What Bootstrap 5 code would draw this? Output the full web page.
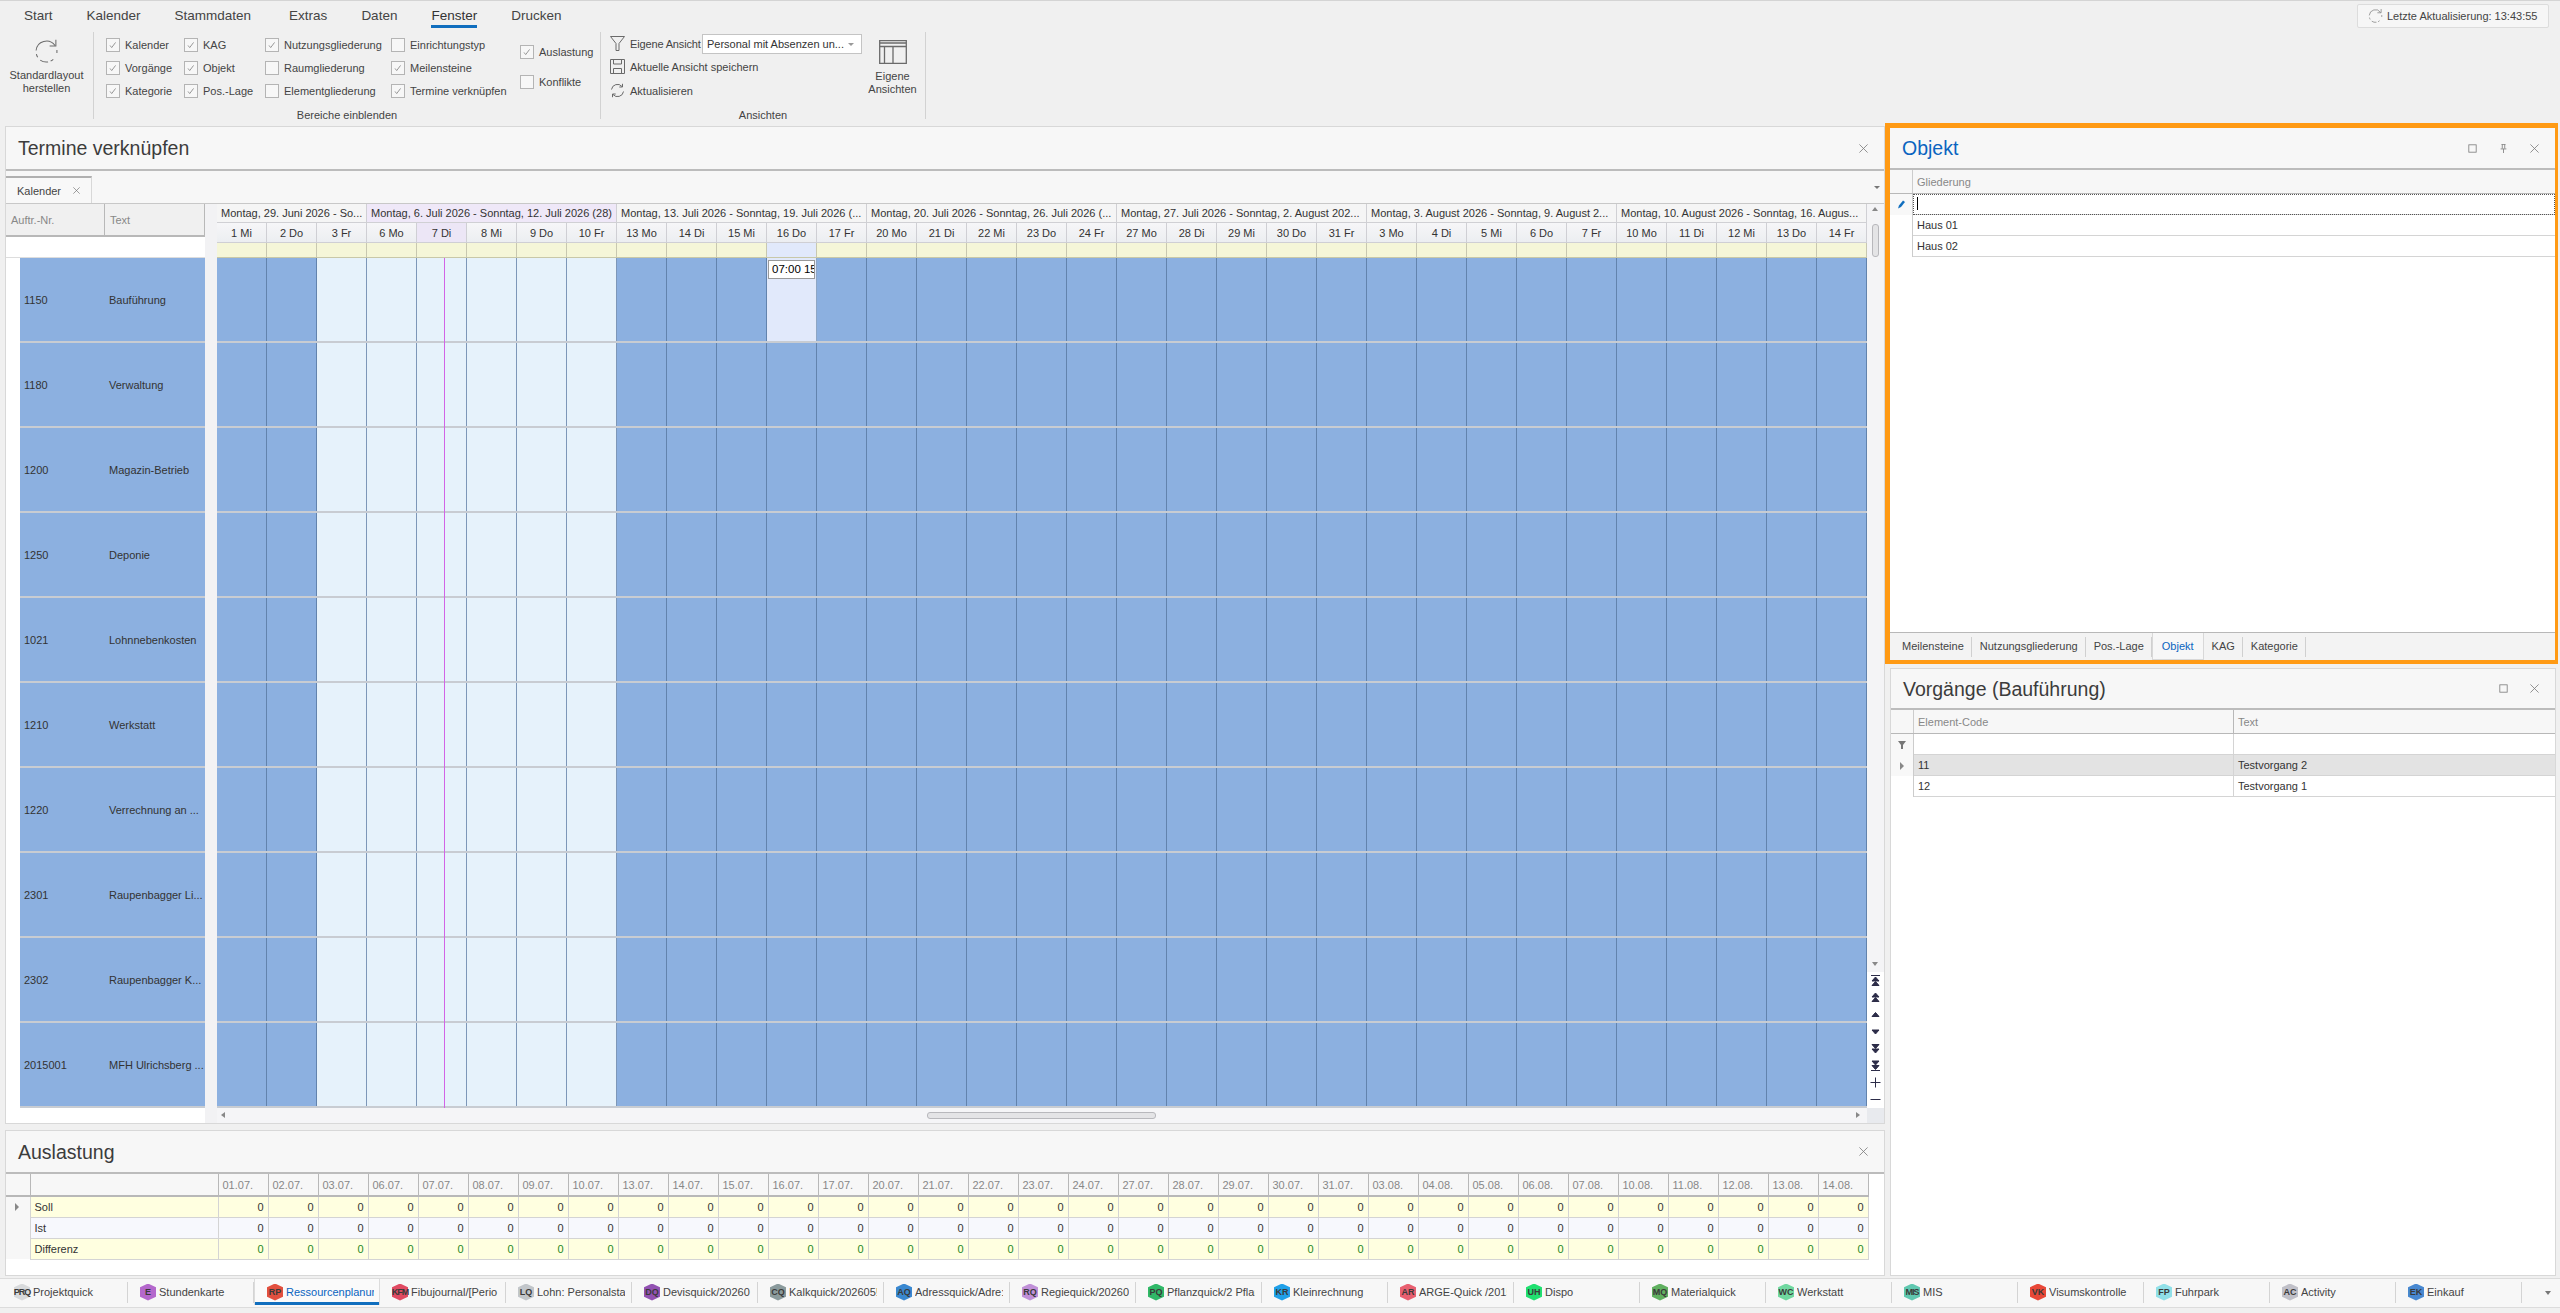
<!DOCTYPE html>
<html lang="de">
<head>
    <meta charset="UTF-8">
    <title>Ressourcenplanung</title>
    <link href="https://cdn.jsdelivr.net/npm/bootstrap@5.3.2/dist/css/bootstrap.min.css" rel="stylesheet">
    <style>
        html, body { height: 100%; }
        body {
            background: #f0f0f0;
            overflow: hidden;
            font: 11px/14px "Liberation Sans", sans-serif;
            color: #333;
            display: flex;
            flex-direction: column;
        }
        .ico { fill: none; stroke: #6a6a6a; stroke-width: 1; display: block; flex: none; }
        .ico-big { stroke-width: 1.3; }

        /* ribbon */
        .ribbon { height: 123px; flex: none; border-top: 1px solid #d4d4d4; position: relative; }
        .rb-tabs { height: 27px; padding-left: 14px; }
        .rb-tabs .nav-link { font-size: 13.5px; line-height: 30px; padding: 0 10px; color: #444; height: 27px; margin-right: 14px; }
        .rb-tabs .nav-link.active { color: #333; box-shadow: inset 0 -3px 0 #106ebe; padding: 0; margin: 0 24px 0 10px; }
        .rb-body { height: 87px; margin-top: 4px; }
        .rb-group { border-right: 1px solid #d2d2d2; display: flex; flex-direction: column; flex: none; }
        .rb-label { height: 12px; line-height: 16px; text-align: center; color: #444; }
        .rb-main { height: 75px; flex: none; display: flex; }
        .rb-big { text-align: center; line-height: 13px; color: #444; }
        .rb-first { height: 87px; align-items: center; }
        .rb-first .ico { margin: 7px 0 5px; }
        .rb-cols { padding-left: 12px; }
        .rb-col { display: flex; flex-direction: column; padding-top: 1px; }
        .rb-col label { height: 23px; display: flex; align-items: center; white-space: nowrap; color: #444; }
        .rb-col.wide label { height: 30px; }
        .rb-col.wide { padding-top: 5px; }
        .rb-check.form-check-input {
            width: 14px; height: 14px; margin: 0 5px 0 0; flex: none; border-radius: 0;
            border: 1px solid #b4b4b4; background-color: #f7f7f7;
        }
        .rb-check.form-check-input:checked {
            background-color: #f7f7f7; border-color: #b4b4b4;
            background-image: url("data:image/svg+xml,%3csvg xmlns='http://www.w3.org/2000/svg' viewBox='0 0 14 14'%3e%3cpath fill='none' stroke='%23888' d='M3.5 7.5l2 2.5 4.5-6'/%3e%3c/svg%3e");
        }
        .view-list { width: 262px; padding-left: 9px; }
        .view-row { height: 23px; display: flex; align-items: center; gap: 5px; white-space: nowrap; color: #444; }
        .view-row.last { margin-top: 1px; }
        .view-name { width: 67px; flex: none; letter-spacing: -.15px; }
        .view-select {
            width: 160px; height: 20px; background: #fff; border: 1px solid #c4c4c4;
            padding: 0 4px; line-height: 18px; position: relative; color: #333;
        }
        .view-select::after {
            content: ""; position: absolute; right: 7px; top: 8px;
            border: 3px solid transparent; border-top: 3px solid #999; border-bottom: 0;
        }
        .view-big { flex: 1; display: flex; flex-direction: column; align-items: center; padding-right: 3px; }
        .view-big .ico { margin: 8px 0 6px; }
        .refresh-btn {
            position: absolute; top: 3px; right: 11px; width: 192px; height: 24px;
            background: #f6f6f6; border: 1px solid #dcdcdc; border-radius: 2px;
            display: flex; align-items: center; gap: 4px; padding-left: 10px; color: #444;
        }

        /* docking area */
        .dock { flex: 1; display: flex; min-height: 0; padding-left: 5px; padding-right: 2px; }
        .dock-left { width: 1880px; flex: none; display: flex; flex-direction: column; gap: 6px; padding-top: 3px; padding-bottom: 2px; }
        .dock-right { flex: 1; display: flex; flex-direction: column; gap: 4px; padding-bottom: 2px; min-width: 0; }
        .pane { background: #f7f7f7; border: 1px solid #d8d8d8; display: flex; flex-direction: column; min-height: 0; }
        .pane-head { height: 44px; flex: none; display: flex; align-items: center; padding: 0 16px 0 12px; gap: 22px; border-bottom: 2px solid #bcbcbc; }
        .pane-head .ico { stroke: #7c7c7c; }
        .pane-title { font-size: 19.5px; line-height: 24px; color: #3c3c3c; margin-right: auto; }
        .plan-pane { flex: 1; }
        .load-pane { height: 146px; flex: none; }
        .load-pane .pane-head { height: 43px; }

        .doc-strip { height: 32px; flex: none; display: flex; position: relative; }
        .doc-tab { width: 86px; height: 27px; margin-top: 5px; border-top: 2px solid #b0b0b0; border-right: 1px solid #d8d8d8; display: flex; align-items: center; padding-left: 11px; gap: 12px; background: #f8f8f8; color: #444; }
        .doc-more { position: absolute; right: 4px; top: 15px; border: 3px solid transparent; border-top: 3px solid #777; border-bottom: 0; }

        .plan-body { flex: 1; display: flex; min-height: 0; border-top: 1px solid #c8c8c8; }
        .plan-side { width: 199px; flex: none; background: #fff; }
        .side-head { display: grid; grid-template-columns: 99px 100px; height: 33px; background: #f0f0f0; border-bottom: 2px solid #b8b8b8; color: #888; }
        .side-head div { padding: 9px 5px; border-right: 1px solid #b8b8b8; }
        .side-filter { height: 21px; border-bottom: 1px solid #ddd; }
        .side-row { height: 85px; margin-left: 14px; background: #8cb0e0; border-bottom: 2px solid #c8ccd2; display: grid; grid-template-columns: 85px 100px; align-items: center; color: #333; }
        .side-row div { padding-left: 4px; white-space: nowrap; overflow: hidden; }
        .plan-gap { width: 12px; flex: none; background: #f2f2f4; }
        .plan-grid { width: 1650px; flex: none; display: flex; flex-direction: column; position: relative; }
        .week-line, .day-line, .mark-line, .plan-row { display: grid; grid-template-columns: repeat(33, 50px); }
        .week-line { height: 19px; background: #f5f5f5; border-bottom: 1px solid #d0d0d4; }
        .week-cell { padding: 2px 0 0 4px; white-space: nowrap; overflow: hidden; border-right: 1px solid #d0d0d4; color: #333; }
        .week-cell.now { background: #efe8f8; }
        .day-line { height: 20px; background: linear-gradient(#f6f6f8, #eceef1); border-bottom: 1px solid #cfcfd4; }
        .day-cell { text-align: center; padding-top: 3px; border-right: 1px solid #cfcfd4; color: #333; }
        .day-cell.now { background: #ece6f6; }
        .mark-line { height: 15px; background: #f5f6d8; border-bottom: 1px solid #c8c8a8; }
        .mark-cell { border-right: 1px solid #c8c8b0; }
        .mark-cell.sel { background: #e1e9fb; }
        .plan-row { height: 85px; border-bottom: 2px solid #c8ccd2; }
        .plan-cell { background: #8cb0e0; border-right: 1px solid #6283ad; }
        .plan-cell.off { background: #e6f2fb; border-right-color: #7d97b8; }
        .plan-cell.sel { background: #e1e9fb; padding: 2px 1px; border-right-color: #8ea6c4; }
        .plan-event { height: 19px; background: #fff; border: 1px solid #999; color: #000; white-space: nowrap; overflow: hidden; padding: 1px 3px; font-size: 11.5px; line-height: 15px; }
        .today-line { position: absolute; left: 227px; top: 54px; bottom: 15px; width: 1px; background: #d264e6; }
        .plan-hbar { height: 15px; background: #f5f5f7; position: relative; flex: none; }
        .hbar-thumb { position: absolute; left: 710px; top: 4px; width: 229px; height: 7px; background: #e4e4e6; border: 1px solid #b8b8bc; border-radius: 3px; }
        .arrow-l, .arrow-r { position: absolute; top: 4px; border: 3px solid transparent; }
        .arrow-l { left: 4px; border-right: 4px solid #888; border-left: 0; }
        .arrow-r { right: 7px; border-left: 4px solid #888; border-right: 0; }
        .plan-vbar { width: 17px; flex: none; display: flex; flex-direction: column; background: #f4f4f6; position: relative; }
        .vbar-thumb { position: absolute; left: 5px; top: 20px; width: 7px; height: 33px; background: #e4e4e6; border: 1px solid #b8b8bc; border-radius: 3px; }
        .vbar-track { flex: 1; position: relative; }
        .vbar-up { position: absolute; left: 5px; top: 3px; border: 3px solid transparent; border-bottom: 4px solid #888; border-top: 0; }
        .vbar-down { position: absolute; left: 5px; bottom: 6px; border: 3px solid transparent; border-top: 4px solid #888; border-bottom: 0; }
        .nav-stack { background: #fff; }
        .nav-stack svg { display: block; width: 17px; height: 17px; fill: #2c2c48; stroke: #2c2c48; stroke-width: 1; }
        .vbar-corner { height: 15px; background: #e8eaee; }

        /* load table */
        .load-wrap { flex: 1; background: #fff; overflow: hidden; }
        .load-table.table { table-layout: fixed; width: 1862px; margin: 0; border-collapse: collapse; }
        .load-table th, .load-table td { height: 21px; padding: 0 4px; font-weight: 400; line-height: 14px; border: 1px solid #d4d4d4; white-space: nowrap; color: #333; vertical-align: middle; }
        .load-table th { height: 22px; background: #f7f7f7; color: #888; border-width: 0 1px 2px 0; border-color: #b8b8b8; }
        .load-table td.num { text-align: right; }
        .load-table td.gut { background: #f7f7f7; border: 0; padding: 0 0 0 9px; }
        .load-table tr.soll td { background: #ffffe0; }
        .load-table tr.ist td { background: #f7f8fd; }
        .load-table tr.diff td { background: #ffffe0; }
        .load-table tr.diff td.num { color: #1e8a1e; }
        .load-table tr td.gut { background: #f7f7f7; }
        .row-mark { display: block; border: 4px solid transparent; border-left: 4px solid #888; border-right: 0; width: 0; }

        /* right panes */
        .focus-pane { height: 541px; flex: none; border: 5px solid #ff9a14; border-bottom-width: 4px; border-right-width: 3px; }
        .focus-pane .pane-title { color: #0a64c0; }
        .focus-pane .pane-head { height: 42px; }
        .list-grid { flex: 1; background: #fff; min-height: 0; }
        .grid-head { height: 24px; display: flex; background: #f7f7f7; color: #888; border-bottom: 1px solid #b8b8b8; }
        .grid-row { height: 21px; display: flex; }
        .grid-gut { width: 23px; flex: none; display: flex; align-items: center; justify-content: center; background: #f8f8f8; border-right: 1px solid #ccc; }
        .grid-row.blank .grid-gut { background: #fff; border-right: 1px solid #ccc; }
        .grid-cell { flex: 1; padding: 3px 4px; border-bottom: 1px solid #d4d4d4; color: #333; }
        .grid-cell.code { flex: none; width: 320px; border-right: 1px solid #d4d4d4; }
        .grid-head .grid-cell { padding-top: 5px; color: #888; border-bottom: 0; }
        .grid-head .grid-cell.code { border-right: 1px solid #b8b8b8; }
        .grid-gut.head { background: #f7f7f7; border-right: 1px solid #ccc; }
        .grid-row.current .grid-cell { background: #e3e3e3; }
        .edit-cell { outline: 1px dotted #555; outline-offset: -1px; position: relative; }
        .caret-mark { display: block; width: 1px; height: 13px; background: #000; }
        .pane-tabs { height: 28px; flex: none; display: flex; background: #f3f3f3; border-top: 1px solid #b8b8b8; align-items: stretch; padding-left: 4px; }
        .pane-tabs a { padding: 6px 8px 0; color: #444; text-decoration: none; position: relative; }
        .pane-tabs a:not(.on)::after { content: ""; position: absolute; right: 0; top: 4px; bottom: 3px; width: 1px; background: #d0d0d0; }
        .pane-tabs a.on { color: #0a64c0; background: #f7f7f7; border-left: 1px solid #d8d8d8; border-right: 1px solid #d8d8d8; border-bottom: 1px solid #d8d8d8; padding: 6px 9px 0; }
        .side-pane { flex: 1; margin-left: 5px; margin-right: 2px; }
        .side-pane .pane-head { height: 41px; }

        /* window tabs */
        .win-bar { height: 30px; flex: none; display: flex; padding-left: 2px; background: #f7f7f7; border-top: 1px solid #dcdcdc; border-bottom: 1px solid #dcdcdc; margin-bottom: 5px; position: relative; }
        .win-tab { width: 126px; flex: none; height: 26px; display: flex; align-items: center; padding-left: 12px; position: relative; color: #444; }
        .win-tab::after { content: ""; position: absolute; right: 0; top: 3px; height: 21px; width: 1px; background: #d4d4d4; }
        .win-tab.active { color: #0a64c0; background: #fafafa; box-shadow: inset 0 -3px 0 #106ebe; border-left: 1px solid #dcdcdc; border-right: 1px solid #dcdcdc; }
        .win-tab.active::after { display: none; }
        .win-text { width: 88px; white-space: nowrap; overflow: hidden; margin-left: 3px; font-size: 11px; }
        .hex { width: 16px; height: 17px; flex: none; position: relative; display: flex; align-items: center; justify-content: center; font-size: 9px; font-weight: 700; color: #3a3a3a; }
        .hex::before { content: ""; position: absolute; inset: 0; background: var(--hex); clip-path: polygon(50% 0, 100% 22%, 100% 78%, 50% 100%, 0 78%, 0 22%); }
        .hex span { position: relative; white-space: nowrap; }
        .hex.tight { letter-spacing: -1px; }
        .win-more { position: absolute; right: 9px; top: 12px; border: 3px solid transparent; border-top: 4px solid #777; border-bottom: 0; }
    </style>
</head>
<body>
    <svg width="0" height="0" class="position-absolute">
        <symbol id="i-x" viewBox="0 0 11 11"><path d="M.5.5l10 10M10.500.5l-10 10"/></symbol>
        <symbol id="i-max" viewBox="0 0 11 11"><rect x="1" y="1" width="9" height="9"/></symbol>
        <symbol id="i-pin" viewBox="0 0 11 11"><path d="M3 .5h5M4 .5v5M7 .5v5M2 6h7M5.500 6v5"/></symbol>
        <symbol id="i-refresh" viewBox="0 0 24 24"><path d="M2 11A10 10 0 0 1 20 6M21 .8v6h-6M22 10.500v3M18.500 19.500a10 10 0 0 1-2.500 1.700M6 20.300A10 10 0 0 0 13.500 22M2.300 14.500A10 10 0 0 0 3.500 17.500"/></symbol>
        <symbol id="i-sync" viewBox="0 0 15 15"><path d="M1.500 6.500A6 6 0 0 1 12 3.500M12.500.8v3.200H9.300M13.500 8.500A6 6 0 0 1 3 11.500M2.500 14.200V11h3.200"/></symbol>
        <symbol id="i-filter" viewBox="0 0 15 15"><path d="M.5.5h14L9 7.500v7H6v-7z"/></symbol>
        <symbol id="i-save" viewBox="0 0 15 15"><path d="M.5.5h14v14H.5zM3.500.5v4.500h8V.5M3.500 14.500v-5h8v5"/></symbol>
        <symbol id="i-table" viewBox="0 0 28 24"><path d="M.7.7h26.600v22.600H.7zM.7 3h26.600M.7 6.500h26.600M5.500 6.500v16.800M14 6.500v16.800"/></symbol>
    </svg>

    <div class="ribbon">
        <ul class="nav rb-tabs">
            <li class="nav-item"><a class="nav-link" href="#">Start</a></li>
            <li class="nav-item"><a class="nav-link" href="#">Kalender</a></li>
            <li class="nav-item me-1"><a class="nav-link" href="#">Stammdaten</a></li>
            <li class="nav-item"><a class="nav-link" href="#">Extras</a></li>
            <li class="nav-item"><a class="nav-link" href="#">Daten</a></li>
            <li class="nav-item"><a class="nav-link active" href="#">Fenster</a></li>
            <li class="nav-item"><a class="nav-link" href="#">Drucken</a></li>
        </ul>
        <div class="rb-body d-flex">
            <div class="rb-group" style="width:94px">
                <div class="rb-main rb-first flex-column">
                    <svg class="ico" width="25" height="25"><use href="#i-refresh"/></svg>
                    <div class="rb-big">Standardlayout<br>herstellen</div>
                </div>
            </div>
            <div class="rb-group" style="width:507px">
                <div class="rb-main rb-cols">
                    <div class="rb-col" style="width:78px">
                        <label><input class="form-check-input rb-check" type="checkbox" checked>Kalender</label>
                        <label><input class="form-check-input rb-check" type="checkbox" checked>Vorgänge</label>
                        <label><input class="form-check-input rb-check" type="checkbox" checked>Kategorie</label>
                    </div>
                    <div class="rb-col" style="width:81px">
                        <label><input class="form-check-input rb-check" type="checkbox" checked>KAG</label>
                        <label><input class="form-check-input rb-check" type="checkbox" checked>Objekt</label>
                        <label><input class="form-check-input rb-check" type="checkbox" checked>Pos.-Lage</label>
                    </div>
                    <div class="rb-col" style="width:126px">
                        <label><input class="form-check-input rb-check" type="checkbox" checked>Nutzungsgliederung</label>
                        <label><input class="form-check-input rb-check" type="checkbox">Raumgliederung</label>
                        <label><input class="form-check-input rb-check" type="checkbox">Elementgliederung</label>
                    </div>
                    <div class="rb-col" style="width:129px">
                        <label><input class="form-check-input rb-check" type="checkbox">Einrichtungstyp</label>
                        <label><input class="form-check-input rb-check" type="checkbox" checked>Meilensteine</label>
                        <label><input class="form-check-input rb-check" type="checkbox" checked>Termine verknüpfen</label>
                    </div>
                    <div class="rb-col wide">
                        <label><input class="form-check-input rb-check" type="checkbox" checked>Auslastung</label>
                        <label><input class="form-check-input rb-check" type="checkbox">Konflikte</label>
                    </div>
                </div>
                <div class="rb-label">Bereiche einblenden</div>
            </div>
            <div class="rb-group" style="width:325px">
                <div class="rb-main">
                    <div class="view-list">
                        <div class="view-row"><svg class="ico" width="15" height="15"><use href="#i-filter"/></svg><span class="view-name">Eigene Ansicht</span><div class="view-select">Personal mit Absenzen un...</div></div>
                        <div class="view-row"><svg class="ico" width="15" height="15"><use href="#i-save"/></svg>Aktuelle Ansicht speichern</div>
                        <div class="view-row last"><svg class="ico" width="15" height="15"><use href="#i-sync"/></svg>Aktualisieren</div>
                    </div>
                    <div class="view-big">
                        <svg class="ico ico-big" width="28" height="24"><use href="#i-table"/></svg>
                        <div class="rb-big">Eigene<br>Ansichten</div>
                    </div>
                </div>
                <div class="rb-label">Ansichten</div>
            </div>
        </div>
        <div class="refresh-btn"><svg class="ico" width="15" height="16"><use href="#i-refresh"/></svg>Letzte Aktualisierung: 13:43:55</div>
    </div>

    <div class="dock">
        <div class="dock-left">
            <div class="pane plan-pane">
                <div class="pane-head">
                    <div class="pane-title">Termine verknüpfen</div>
                    <svg class="ico" width="9" height="9"><use href="#i-x"/></svg>
                </div>
                <div class="doc-strip">
                    <div class="doc-tab">Kalender <svg class="ico" width="7" height="7"><use href="#i-x"/></svg></div>
                    <span class="doc-more"></span>
                </div>
                <div class="plan-body">
                    <div class="plan-side">
                        <div class="side-head"><div>Auftr.-Nr.</div><div>Text</div></div>
                        <div class="side-filter"></div>
                        <div id="side-rows"></div>
                    </div>
                    <div class="plan-gap"></div>
                    <div class="plan-grid">
                        <div class="week-line" id="week-line"></div>
                        <div class="day-line" id="day-line"></div>
                        <div class="mark-line" id="mark-line"></div>
                        <div id="plan-rows"></div>
                        <div class="today-line"></div>
                        <div class="plan-hbar"><span class="arrow-l"></span><div class="hbar-thumb"></div><span class="arrow-r"></span></div>
                    </div>
                    <div class="plan-vbar">
                        <div class="vbar-track"><span class="vbar-up"></span><div class="vbar-thumb"></div><span class="vbar-down"></span></div>
                        <div class="nav-stack">
                            <svg viewBox="0 0 17 17"><path d="M4 3.500h9"/><path d="M8.500 5l3.500 4H5zM8.500 9.500l3.500 4H5z"/></svg>
                            <svg viewBox="0 0 17 17"><path d="M8.500 4l3.500 4H5zM8.500 8.500l3.500 4H5z"/></svg>
                            <svg viewBox="0 0 17 17"><path d="M8.500 6.500l3.500 4H5z"/></svg>
                            <svg viewBox="0 0 17 17"><path d="M8.500 11l3.500-4H5z"/></svg>
                            <svg viewBox="0 0 17 17"><path d="M8.500 8.500l3.500-4H5zM8.500 13l3.500-4H5z"/></svg>
                            <svg viewBox="0 0 17 17"><path d="M8.500 8l3.500-4H5zM8.500 12.500l3.500-4H5z"/><path d="M4 13.500h9"/></svg>
                            <svg viewBox="0 0 17 17"><path d="M3.500 8.500h10M8.500 3.500v10" fill="none"/></svg>
                            <svg viewBox="0 0 17 17"><path d="M3.500 8.500h10" fill="none"/></svg>
                        </div>
                        <div class="vbar-corner"></div>
                    </div>
                </div>
            </div>
            <div class="pane load-pane">
                <div class="pane-head">
                    <div class="pane-title">Auslastung</div>
                    <svg class="ico" width="9" height="9"><use href="#i-x"/></svg>
                </div>
                <div class="load-wrap"><table class="table load-table" id="load-table"></table></div>
            </div>
        </div>
        <div class="dock-right">
            <div class="pane focus-pane">
                <div class="pane-head">
                    <div class="pane-title">Objekt</div>
                    <svg class="ico" width="9" height="9"><use href="#i-max"/></svg>
                    <svg class="ico" width="9" height="9"><use href="#i-pin"/></svg>
                    <svg class="ico" width="9" height="9"><use href="#i-x"/></svg>
                </div>
                <div class="list-grid">
                    <div class="grid-head"><div class="grid-gut head"></div><div class="grid-cell">Gliederung</div></div>
                    <div class="grid-row">
                        <div class="grid-gut"><svg width="11" height="11" viewBox="0 0 11 11"><path d="M2 9.500l1-3 4-5 2 1.500-4 5z" fill="#106ebe"/></svg></div>
                        <div class="grid-cell edit-cell"><span class="caret-mark"></span></div>
                    </div>
                    <div class="grid-row blank"><div class="grid-gut"></div><div class="grid-cell">Haus 01</div></div>
                    <div class="grid-row blank"><div class="grid-gut"></div><div class="grid-cell">Haus 02</div></div>
                </div>
                <div class="pane-tabs">
                    <a href="#">Meilensteine</a>
                    <a href="#">Nutzungsgliederung</a>
                    <a href="#">Pos.-Lage</a>
                    <a href="#" class="on">Objekt</a>
                    <a href="#">KAG</a>
                    <a href="#">Kategorie</a>
                </div>
            </div>
            <div class="pane side-pane">
                <div class="pane-head">
                    <div class="pane-title">Vorgänge (Bauführung)</div>
                    <svg class="ico" width="9" height="9"><use href="#i-max"/></svg>
                    <svg class="ico" width="9" height="9"><use href="#i-x"/></svg>
                </div>
                <div class="list-grid">
                    <div class="grid-head"><div class="grid-gut head"></div><div class="grid-cell code">Element-Code</div><div class="grid-cell">Text</div></div>
                    <div class="grid-row"><div class="grid-gut"><svg width="10" height="10" viewBox="0 0 10 10"><path d="M1 1h8L6 5v4H4V5z" fill="#777"/></svg></div><div class="grid-cell code"></div><div class="grid-cell"></div></div>
                    <div class="grid-row current"><div class="grid-gut"><span class="row-mark"></span></div><div class="grid-cell code">11</div><div class="grid-cell">Testvorgang 2</div></div>
                    <div class="grid-row blank"><div class="grid-gut"></div><div class="grid-cell code">12</div><div class="grid-cell">Testvorgang 1</div></div>
                </div>
            </div>
        </div>
    </div>

    <div class="win-bar" id="win-bar"><span class="win-more"></span></div>

    <script>
        // Spalten des Kalenders
        const days = [
            '1 Mi','2 Do','3 Fr','6 Mo','7 Di','8 Mi','9 Do','10 Fr','13 Mo','14 Di','15 Mi','16 Do','17 Fr',
            '20 Mo','21 Di','22 Mi','23 Do','24 Fr','27 Mo','28 Di','29 Mi','30 Do','31 Fr',
            '3 Mo','4 Di','5 Mi','6 Do','7 Fr','10 Mo','11 Di','12 Mi','13 Do','14 Fr'
        ];
        const weeks = [
            ['Montag, 29. Juni 2026 - So...', 3],
            ['Montag, 6. Juli 2026 - Sonntag, 12. Juli 2026 (28)', 5, 'now'],
            ['Montag, 13. Juli 2026 - Sonntag, 19. Juli 2026 (...', 5],
            ['Montag, 20. Juli 2026 - Sonntag, 26. Juli 2026 (...', 5],
            ['Montag, 27. Juli 2026 - Sonntag, 2. August 202...', 5],
            ['Montag, 3. August 2026 - Sonntag, 9. August 2...', 5],
            ['Montag, 10. August 2026 - Sonntag, 16. Augus...', 5]
        ];
        const jobs = [
            ['1150','Bauführung'],['1180','Verwaltung'],['1200','Magazin-Betrieb'],['1250','Deponie'],
            ['1021','Lohnnebenkosten'],['1210','Werkstatt'],['1220','Verrechnung an ...'],
            ['2301','Raupenbagger Li...'],['2302','Raupenbagger K...'],['2015001','MFH Ulrichsberg ...']
        ];
        const loadDates = [
            '01.07.','02.07.','03.07.','06.07.','07.07.','08.07.','09.07.','10.07.','13.07.','14.07.','15.07.',
            '16.07.','17.07.','20.07.','21.07.','22.07.','23.07.','24.07.','27.07.','28.07.','29.07.','30.07.','31.07.',
            '03.08.','04.08.','05.08.','06.08.','07.08.','10.08.','11.08.','12.08.','13.08.','14.08.'
        ];
        const winTabs = [
            ['PRQ','Projektquick','#d8dadc'],['E','Stundenkarte','#b468cc'],['RP','Ressourcenplanur','#e2503f'],
            ['KFM','Fibujournal/[Perio','#e04a62'],['LQ','Lohn: Personalsta','#c2c6ca'],['DQ','Devisquick/20260','#9252b2'],
            ['CQ','Kalkquick/202605!','#8a9a9c'],['AQ','Adressquick/Adre:','#3a88d0'],['RQ','Regiequick/20260','#c090d8'],
            ['PQ','Pflanzquick/2 Pflar','#30b868'],['KR','Kleinrechnung','#20a0e8'],['AR','ARGE-Quick /2015','#e86070'],
            ['UH','Dispo','#20e070'],['MQ','Materialquick','#60b060'],['WC','Werkstatt','#70d8a0'],
            ['MIS','MIS','#60c8b0'],['VK','Visumskontrolle','#e84838'],['FP','Fuhrpark','#90e0e8'],
            ['AC','Activity','#c0c0c8'],['EK','Einkauf','#4888d0']
        ];

        function el(tag, cls, text) {
            const node = document.createElement(tag);
            if (cls) node.className = cls;
            if (text !== undefined) node.textContent = text;
            return node;
        }

        const weekLine = document.getElementById('week-line');
        weeks.forEach(w => {
            const cell = el('div', 'week-cell ' + (w[2] || ''), w[0]);
            cell.style.gridColumn = 'span ' + w[1];
            weekLine.appendChild(cell);
        });

        const dayLine = document.getElementById('day-line');
        const markLine = document.getElementById('mark-line');
        days.forEach((d, i) => {
            dayLine.appendChild(el('div', 'day-cell' + (i === 4 ? ' now' : ''), d));
            markLine.appendChild(el('div', 'mark-cell' + (i === 11 ? ' sel' : '')));
        });

        const sideRows = document.getElementById('side-rows');
        const planRows = document.getElementById('plan-rows');
        jobs.forEach((job, r) => {
            const side = el('div', 'side-row');
            side.appendChild(el('div', '', job[0]));
            side.appendChild(el('div', '', job[1]));
            sideRows.appendChild(side);

            const row = el('div', 'plan-row');
            days.forEach((d, i) => {
                let cls = 'plan-cell';
                if (i >= 2 && i <= 7) cls += ' off';
                if (r === 0 && i === 11) cls += ' sel';
                const cell = el('div', cls);
                if (r === 0 && i === 11) cell.appendChild(el('div', 'plan-event', '07:00 15:00'));
                row.appendChild(cell);
            });
            planRows.appendChild(row);
        });

        // Auslastung
        const load = document.getElementById('load-table');
        let html = '<colgroup><col style="width:24px"><col style="width:188px">' + loadDates.map(() => '<col style="width:50px">').join('') + '</colgroup>';
        html += '<thead><tr><th></th><th></th>' + loadDates.map(d => '<th>' + d + '</th>').join('') + '</tr></thead><tbody>';
        [['soll','Soll'],['ist','Ist'],['diff','Differenz']].forEach((r, i) => {
            html += '<tr class="' + r[0] + '"><td class="gut">' + (i === 0 ? '<span class="row-mark"></span>' : '') + '</td><td>' + r[1] + '</td>';
            html += loadDates.map(() => '<td class="num">0</td>').join('') + '</tr>';
        });
        load.innerHTML = html + '</tbody>';

        // Fensterleiste
        const winBar = document.getElementById('win-bar');
        winTabs.forEach((t, i) => {
            const tab = el('div', 'win-tab' + (i === 2 ? ' active' : ''));
            const hex = el('div', 'hex' + (t[0].length > 2 ? ' tight' : ''));
            hex.style.setProperty('--hex', t[2]);
            hex.appendChild(el('span', '', t[0]));
            tab.appendChild(hex);
            tab.appendChild(el('div', 'win-text', t[1]));
            winBar.insertBefore(tab, winBar.lastElementChild);
        });
    </script>
    <script src="https://cdn.jsdelivr.net/npm/bootstrap@5.3.2/dist/js/bootstrap.bundle.min.js"></script>
</body>
</html>
